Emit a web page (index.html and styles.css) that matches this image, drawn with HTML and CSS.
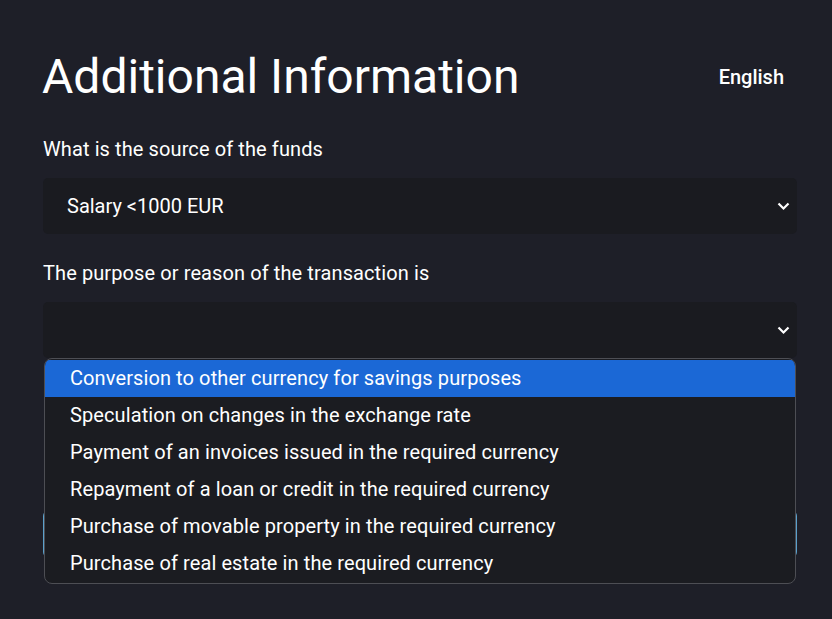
FILE: index.html
```html
<!DOCTYPE html>
<html>
<head>
<meta charset="utf-8">
<link rel="stylesheet" href="styles.css">
</head>
<body>
<div class="page">
  <div class="header">
    <h1 class="title">Additional Information</h1>
    <span class="lang">English</span>
  </div>
  <div class="field">
    <label class="label">What is the source of the funds</label>
    <div class="select">
      <span class="value">Salary &lt;1000 EUR</span>
      <svg class="chev" width="13" height="9" viewBox="0 0 13 9"><path d="M1.5 1.5 L6.5 6.5 L11.5 1.5" fill="none" stroke="#fff" stroke-width="2.2"/></svg>
    </div>
  </div>
  <div class="field field2">
    <label class="label">The purpose or reason of the transaction is</label>
    <div class="select-wrap">
      <div class="select">
        <span class="value"></span>
        <svg class="chev" width="13" height="9" viewBox="0 0 13 9"><path d="M1.5 1.5 L6.5 6.5 L11.5 1.5" fill="none" stroke="#fff" stroke-width="2.2"/></svg>
      </div>
      <ul class="menu">
        <li class="opt active">Conversion to other currency for savings purposes</li>
        <li class="opt">Speculation on changes in the exchange rate</li>
        <li class="opt">Payment of an invoices issued in the required currency</li>
        <li class="opt">Repayment of a loan or credit in the required currency</li>
        <li class="opt">Purchase of movable property in the required currency</li>
        <li class="opt">Purchase of real estate in the required currency</li>
      </ul>
    </div>
  </div>
  <div class="hidden-field"></div>
  <button class="btn"></button>
</div>
</body>
</html>
```
FILE: styles.css
```css
* { box-sizing: border-box; }
html, body { margin: 0; padding: 0; }
body {
  background: #1e1f28;
  color: #ffffff;
  font-family: Roboto, "Liberation Sans", sans-serif;
  width: 832px;
  height: 619px;
  overflow: hidden;
}
.page {
  padding: 42px 35px 0 43px;
  width: 832px;
}
.header {
  display: flex;
  align-items: center;
  justify-content: space-between;
  height: 70px;
}
.title {
  margin: 0;
  font-size: 48px;
  font-weight: 400;
  line-height: 1;
  margin-left: -1px;
}
.lang {
  font-size: 20px;
  font-weight: 500;
  margin-right: 13px;
}
.field { margin-top: 24px; }
.field2 { margin-top: 26px; }
.label {
  display: block;
  font-size: 20px;
  line-height: 26px;
  letter-spacing: 0.1px;
}
.select-wrap { position: relative; }
.select {
  margin-top: 16px;
  height: 56px;
  background: #1a1b20;
  border-radius: 5px;
  display: flex;
  align-items: center;
  justify-content: space-between;
  padding: 0 7px 0 24px;
}
.value { font-size: 20px; }
.chev { display: block; }
.menu {
  position: absolute;
  left: 1px;
  top: 56px;
  width: 752px;
  margin: 0;
  padding: 1px 0;
  list-style: none;
  background: #1b1c21;
  border: 1.5px solid #4d4e54;
  border-radius: 8px;
  overflow: hidden;
  z-index: 5;
}
.opt {
  height: 37px;
  line-height: 37px;
  padding-left: 25px;
  font-size: 20px;
  letter-spacing: 0.1px;
}
.opt.active { background: #1b68d6; }
.hidden-field {
  margin-top: 32px;
  height: 14px;
  border-left: 1px solid #55575c;
  margin-left: 1px;
}
.btn {
  display: block;
  margin-top: 106px;
  width: 754px;
  height: 48px;
  background: transparent;
  border: 1px solid #5aa0cc;
  border-radius: 6px;
}
```
